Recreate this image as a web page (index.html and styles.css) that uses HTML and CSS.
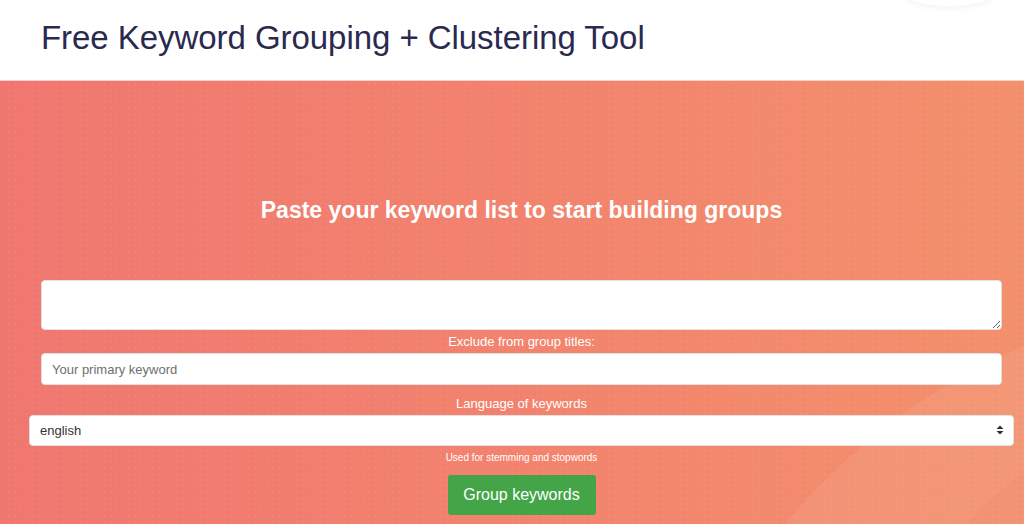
FILE: index.html
```html
<!DOCTYPE html>
<html lang="en">
<head>
    <meta charset="UTF-8">
    <meta name="viewport" content="width=device-width, initial-scale=1.0">
    <title>Free Keyword Grouping + Clustering Tool</title>
    <link rel="stylesheet" href="styles.css">
</head>
<body>
    <header class="page-header">
        <div class="header-card"></div>
        <h1>Free Keyword Grouping + Clustering Tool</h1>
    </header>

    <section class="hero">
        <div class="hero-shape shape-one"></div>
        <div class="hero-shape shape-two"></div>
        <h2>Paste your keyword list to start building groups</h2>

        <form class="group-form" onsubmit="return false;">
            <div class="field-inset">
                <textarea class="keyword-list"></textarea>
            </div>
            <label class="field-label" for="exclude">Exclude from group titles:</label>
            <div class="field-inset">
                <input type="text" id="exclude" class="text-input" placeholder="Your primary keyword">
            </div>
            <label class="field-label lang-label" for="language">Language of keywords</label>
            <div class="select-wrap">
                <select id="language" class="select-input">
                    <option>english</option>
                    <option>german</option>
                    <option>french</option>
                    <option>spanish</option>
                </select>
                <!-- up/down arrow of the select -->
                <svg class="select-arrow" width="8" height="10" viewBox="0 0 8 10">
                    <path d="M4 0.5 L7.5 4 L0.5 4 Z M0.5 6 L7.5 6 L4 9.5 Z" fill="#2f2f2f"/>
                </svg>
            </div>
            <p class="help-text">Used for stemming and stopwords</p>
            <button type="submit" class="submit-btn">Group keywords</button>
        </form>
    </section>
</body>
</html>
```

FILE: styles.css
```css
body {
    margin: 0;
    font-family: 'Liberation Sans', Arial, sans-serif;
    background-color: #ffffff;
    overflow: hidden;
}

.page-header {
    position: relative;
    height: 80px;
    padding: 0 41px;
    box-sizing: border-box;
    display: flex;
    align-items: center;
}

.header-card {
    position: absolute;
    top: -20px;
    right: 30px;
    width: 90px;
    height: 26px;
    border-radius: 50%;
    box-shadow: 0 2px 6px rgba(0, 0, 0, 0.05);
}

h1 {
    margin: 0;
    padding-bottom: 4px;
    font-size: 33px;
    font-weight: normal;
    color: #2a2950;
    letter-spacing: -0.05px;
}

.hero {
    position: relative;
    height: 444px;
    box-sizing: border-box;
    padding: 116px 10px 0 29px;
    background-color: #f17b6f;
    background-image:
        radial-gradient(rgba(255, 255, 255, 0.045) 1px, transparent 1.3px),
        linear-gradient(90deg, #f07770 0%, #f2826d 50%, #f3906c 100%);
    background-size: 6px 6px, 100% 100%;
    border-top: 1px solid #f5d2cc;
    overflow: hidden;
}

.hero-shape {
    position: absolute;
    border-radius: 50%;
}

.shape-one {
    left: 640px;
    top: 215px;
    width: 1260px;
    height: 1260px;
    background: rgba(255, 255, 255, 0.07);
}

.shape-two {
    left: 790px;
    top: 250px;
    width: 1260px;
    height: 1260px;
    background: rgba(238, 120, 95, 0.1);
}

.hero h2 {
    position: relative;
    margin: 0 0 56px;
    text-align: center;
    color: #ffffff;
    font-size: 23px;
    font-weight: bold;
}

.group-form {
    position: relative;
    display: flex;
    flex-direction: column;
    align-items: center;
}

.field-inset {
    width: 100%;
    padding: 0 12px;
    box-sizing: border-box;
}

.keyword-list,
.text-input,
.select-input {
    display: block;
    width: 100%;
    box-sizing: border-box;
    border: 1px solid #e2e2e2;
    border-radius: 4px;
    background-color: #ffffff;
    font-family: 'Liberation Sans', Arial, sans-serif;
    font-size: 13px;
    color: #495057;
}

.keyword-list {
    height: 50px;
    resize: vertical;
}

.text-input {
    height: 32px;
    padding: 0 10px;
}

.text-input::placeholder {
    color: #6c6f73;
}

.field-label {
    display: block;
    margin: 4px 0 4px;
    color: #ffffff;
    font-size: 13px;
}

.lang-label {
    margin: 11px 0 4px;
}

.select-wrap {
    position: relative;
    width: 100%;
}

.select-input {
    height: 31px;
    padding: 0 10px;
    appearance: none;
    color: #333333;
}

.select-arrow {
    position: absolute;
    right: 10px;
    top: 10px;
    pointer-events: none;
}

.help-text {
    margin: 6px 0 12px;
    color: #ffffff;
    font-size: 10px;
}

.submit-btn {
    width: 148px;
    height: 40px;
    border: none;
    border-radius: 3px;
    background-color: #43a548;
    color: #ffffff;
    font-family: 'Liberation Sans', Arial, sans-serif;
    font-size: 16px;
    cursor: pointer;
}

.submit-btn:hover {
    background-color: #3a9440;
}
```
